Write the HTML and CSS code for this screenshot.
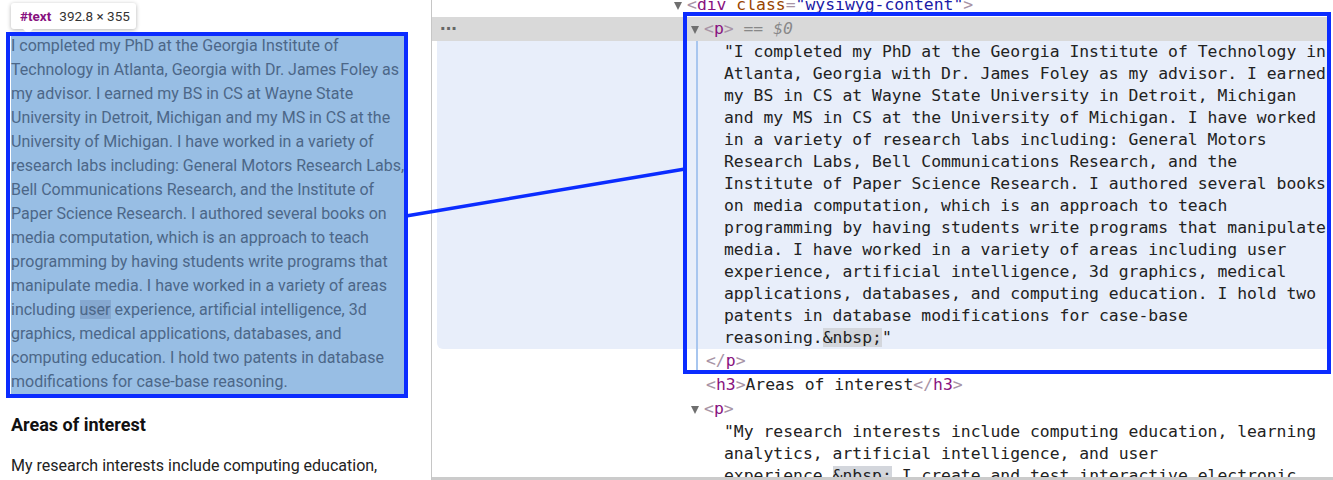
FILE: index.html
```html
<!DOCTYPE html>
<html>
<head>
<meta charset="utf-8">
<link rel="stylesheet" href="styles.css">
</head>
<body>
<div class="app">
  <div class="page">
    <h2 class="bio-title">Biography</h2>
    <p class="bio">I completed my PhD at the Georgia Institute of<br>Technology in Atlanta, Georgia with Dr. James Foley as<br>my advisor. I earned my BS in CS at Wayne State<br>University in Detroit, Michigan and my MS in CS at the<br>University of Michigan. I have worked in a variety of<br>research labs including: General Motors Research Labs,<br>Bell Communications Research, and the Institute of<br>Paper Science Research. I authored several books on<br>media computation, which is an approach to teach<br>programming by having students write programs that<br>manipulate media. I have worked in a variety of areas<br>including <span class="match">user</span> experience, artificial intelligence, 3d<br>graphics, medical applications, databases, and<br>computing education. I hold two patents in database<br>modifications for case-base reasoning.</p>
    <h3 class="areas">Areas of interest</h3>
    <p class="research">My research interests include computing education,</p>
  </div>

  <div class="devtools">
    <div class="tree">
      <div class="row d1"><span class="tri"></span><span class="b">&lt;</span><span class="t">div</span> <span class="an">class</span><span class="b">=</span><span class="av">"wysiwyg-content"</span><span class="b">&gt;</span></div>
      <div class="row selected"><span class="dots">&middot;&middot;&middot;</span><span class="tri"></span><span class="b">&lt;</span><span class="t">p</span><span class="b">&gt;</span> <span class="eq">==</span> <span class="dollar">$0</span></div>
      <div class="band">
        <div class="lines">
          <div class="ln">"I completed my PhD at the Georgia Institute of Technology in</div>
          <div class="ln">Atlanta, Georgia with Dr. James Foley as my advisor. I earned</div>
          <div class="ln">my BS in CS at Wayne State University in Detroit, Michigan</div>
          <div class="ln">and my MS in CS at the University of Michigan. I have worked</div>
          <div class="ln">in a variety of research labs including: General Motors</div>
          <div class="ln">Research Labs, Bell Communications Research, and the</div>
          <div class="ln">Institute of Paper Science Research. I authored several books</div>
          <div class="ln">on media computation, which is an approach to teach</div>
          <div class="ln">programming by having students write programs that manipulate</div>
          <div class="ln">media. I have worked in a variety of areas including user</div>
          <div class="ln">experience, artificial intelligence, 3d graphics, medical</div>
          <div class="ln">applications, databases, and computing education. I hold two</div>
          <div class="ln">patents in database modifications for case-base</div>
          <div class="ln">reasoning.<span class="ent">&amp;nbsp;</span>"</div>
        </div>
      </div>
      <div class="close-row"><span class="b">&lt;/</span><span class="t">p</span><span class="b">&gt;</span></div>
      <div class="row d2"><span class="b">&lt;</span><span class="t">h3</span><span class="b">&gt;</span>Areas of interest<span class="b">&lt;/</span><span class="t">h3</span><span class="b">&gt;</span></div>
      <div class="row d2x"><span class="tri"></span><span class="b">&lt;</span><span class="t">p</span><span class="b">&gt;</span></div>
      <div class="lines2">
        <div class="ln">"My research interests include computing education, learning</div>
        <div class="ln">analytics, artificial intelligence, and user</div>
        <div class="ln">experience.<span class="ent">&amp;nbsp;</span> I create and test interactive electronic</div>
      </div>
    </div>
  </div>

  <div class="tooltip"><span class="tt-name">#text</span><span class="tt-size">392.8 × 355</span></div>
  <div class="hl-left"></div>
  <div class="hl-right"></div>
  <svg class="connector" width="1333" height="480" viewBox="0 0 1333 480">
    <line x1="406" y1="216" x2="685" y2="169" stroke="#0b2cff" stroke-width="3.5"/>
  </svg>
</div>
</body>
</html>
```

FILE: styles.css
```css
html, body {
  margin: 0;
  padding: 0;
  background: #fff;
}

.app {
  position: relative;
  display: flex;
  width: 1333px;
  height: 480px;
  overflow: hidden;
}

/* ---------- left page ---------- */
.page {
  width: 420px;
  flex: 0 0 420px;
  padding-left: 11px;
  border-right: 1px solid #c6c6c6;
  font-family: Roboto, "Liberation Sans", sans-serif;
  overflow: hidden;
}

.bio-title {
  margin: -27px 0 33px 0;
  font-size: 24px;
  line-height: 28px;
  font-weight: 700;
  color: #111;
}

.bio {
  margin: 0;
  width: 393px;
  font-size: 16px;
  line-height: 24px;
  color: #4c6788;
  background: #98bee4;
  white-space: nowrap;
}

.match {
  background: #86a8d0;
}

.areas {
  margin: 20px 0 0 0;
  font-size: 18px;
  line-height: 22px;
  font-weight: 700;
  color: #111;
}

.research {
  margin: 18px 0 0 0;
  font-size: 16px;
  line-height: 24px;
  color: #222;
  white-space: nowrap;
}

/* ---------- devtools ---------- */
.devtools {
  flex: 1;
  height: 480px;
  box-sizing: border-box;
  border-bottom: 3px solid #cbcbcb;
  padding-right: 3px;
  overflow: hidden;
  font-family: "DejaVu Sans Mono", "Liberation Mono", monospace;
  font-size: 16.4px;
  color: #222;
}

.tree {
  margin-top: -7px;
}

.row {
  height: 24px;
  line-height: 24px;
  white-space: pre;
}

.row.d1 { padding-left: 241px; }
.row.d2 { padding-left: 274px; }
.row.d2x { padding-left: 258px; }

.row.selected {
  background: #d9d9d9;
  padding-left: 8px;
}

.dots {
  display: inline-block;
  vertical-align: top;
  width: 250px;
  font-family: "Liberation Sans", sans-serif;
  font-size: 20px;
  font-weight: 700;
  letter-spacing: -1px;
  color: #666;
  line-height: 22px;
}

.tri {
  display: inline-block;
  vertical-align: top;
  width: 14px;
  height: 24px;
  position: relative;
}
.tri::before {
  content: "";
  position: absolute;
  left: 1px;
  top: 9px;
  border-left: 4.5px solid transparent;
  border-right: 4.5px solid transparent;
  border-top: 8px solid #6f6f6f;
}

.b { color: #a894a6; }
.t { color: #881280; }
.an { color: #994500; }
.av { color: #1a1aa6; }
.eq { color: #888; }
.dollar { color: #888; font-style: italic; }

.band {
  margin-left: 5px;
  background: #e8eefa;
  border-bottom-left-radius: 6px;
}

.lines {
  margin-left: 259px;
  border-left: 2px solid #a8c6ef;
  padding-left: 26px;
}

.ln {
  height: 22px;
  line-height: 22px;
  white-space: nowrap;
}

.ent {
  background: #d3d6dc;
}

.close-row {
  margin-left: 264px;
  border-left: 2px solid #a8c6ef;
  padding-left: 8px;
  height: 24px;
  line-height: 24px;
}

.lines2 {
  padding-left: 292px;
}

/* ---------- overlays ---------- */
.tooltip {
  position: absolute;
  left: 11px;
  top: 3px;
  width: 125px;
  height: 26px;
  box-sizing: border-box;
  background: #fff;
  border-radius: 3px;
  box-shadow: 0 1px 4px rgba(0, 0, 0, 0.3);
  display: flex;
  align-items: center;
  padding-left: 9px;
  font-family: Roboto, "Liberation Sans", sans-serif;
  font-size: 13.5px;
  white-space: nowrap;
}
.tooltip::after {
  content: "";
  position: absolute;
  left: 12px;
  bottom: -5px;
  border-left: 5px solid transparent;
  border-right: 5px solid transparent;
  border-top: 5px solid #fff;
}
.tt-name {
  color: #881280;
  font-weight: 700;
  margin-right: 8px;
}
.tt-size {
  color: #333;
}

.hl-left {
  position: absolute;
  left: 6px;
  top: 32px;
  width: 402px;
  height: 366px;
  box-sizing: border-box;
  border: 4px solid #0b2cff;
}

.hl-right {
  position: absolute;
  left: 683px;
  top: 12px;
  width: 648px;
  height: 362px;
  box-sizing: border-box;
  border: 4px solid #0b2cff;
}

.connector {
  position: absolute;
  left: 0;
  top: 0;
  pointer-events: none;
}
```
